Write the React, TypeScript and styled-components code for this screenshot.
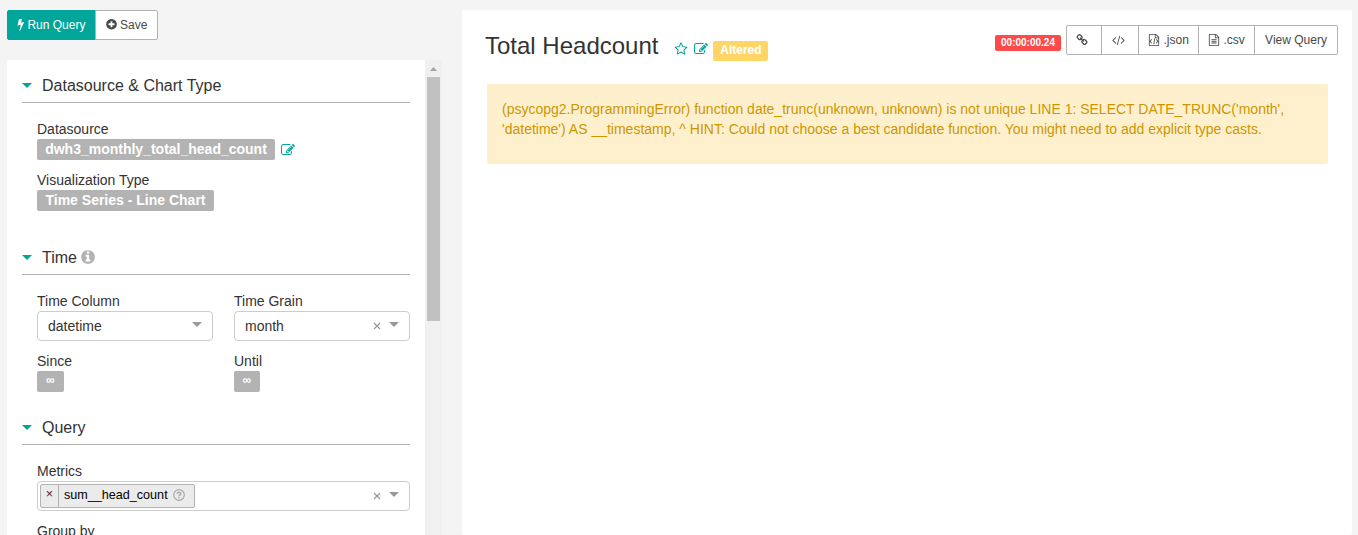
import React from 'react';
import styled, { createGlobalStyle } from 'styled-components';

const Global = createGlobalStyle`
  *, *::before, *::after { box-sizing: border-box; }
  html, body { margin: 0; height: 100%; overflow: hidden; }
  body {
    background: #f4f4f4;
    color: #333;
    font: 14px/20px "Liberation Sans", Arial, Helvetica, sans-serif;
  }
  #root { height: 100%; }
`;

const GREY = '#b3b3b3';
const TEAL = '#00a699';

const Page = styled.main`
  display: flex;
  gap: 20px;
  height: 100vh;
  padding: 10px 6px 0 7px;
  overflow: hidden;
`;

const Sidebar = styled.aside`
  display: flex;
  flex-direction: column;
  gap: 20px;
  width: 435px;
  flex: none;
  min-height: 0;
`;

const ButtonGroup = styled.div`
  display: flex;
  flex: none;
`;

const Button = styled.button<{ $primary?: boolean; $width: number; $nudge?: number }>`
  display: flex;
  align-items: center;
  justify-content: center;
  width: ${p => p.$width}px;
  height: 30px;
  padding: 0 ${p => p.$nudge ?? 0}px 1px 0;
  border: 1px solid ${p => (p.$primary ? TEAL : GREY)};
  background: ${p => (p.$primary ? TEAL : '#fff')};
  color: ${p => (p.$primary ? '#fff' : '#484848')};
  font: 12px/18px "Liberation Sans", Arial, sans-serif;
  white-space: pre;
  & + & { margin-left: -1px; }
  &:first-child { border-radius: 2px 0 0 2px; }
  &:last-child { border-radius: 0 2px 2px 0; }
`;

const Scroller = styled.div`
  display: flex;
  flex: 1;
  min-height: 0;
`;

const Controls = styled.div`
  width: 418px;
  padding: 12px 15px 0;
  background: #fff;
  border-radius: 2px 0 0 0;
  overflow: hidden;
`;

const Track = styled.div`
  display: flex;
  flex-direction: column;
  align-items: center;
  width: 17px;
  background: #f0f0f0;
`;

const TrackArrow = styled.div`
  display: flex;
  align-items: center;
  justify-content: center;
  height: 17px;
  svg { display: block; }
`;

const Thumb = styled.div`
  width: 13px;
  height: 244px;
  background: #c1c1c1;
`;

const Section = styled.section<{ $gap?: number }>`
  margin-bottom: ${p => p.$gap ?? 0}px;
`;

const SectionTitle = styled.h2`
  display: flex;
  align-items: center;
  height: 31px;
  margin: 0 0 16px;
  padding-bottom: 2px;
  border-bottom: 1px solid ${GREY};
  font-size: 16px;
  font-weight: 400;
  line-height: 20px;
  svg { margin: 0 0 2px -1px; }
`;

const Caret = styled.span<{ $color: string }>`
  flex: none;
  border: 5px solid transparent;
  border-top-color: ${p => p.$color};
  border-bottom: 0;
`;

const TitleCaret = styled(Caret)`
  margin: 0 10px 2px 0;
`;

const Fields = styled.div`
  display: grid;
  gap: 10px 21px;
  padding: 0 0 0 15px;
`;

const TwoFields = styled(Fields)`
  grid-template-columns: 176px 176px;
`;

const Label = styled.div`
  height: 20px;
`;

const TagRow = styled.div`
  display: flex;
  align-items: center;
  gap: 6px;
  height: 21px;
`;

const Tag = styled.span<{ $width: number; $small?: boolean }>`
  width: ${p => p.$width}px;
  height: 21px;
  border-radius: 2px;
  background: ${GREY};
  color: #fff;
  font-size: ${p => (p.$small ? 12 : 14)}px;
  font-weight: 700;
  line-height: ${p => (p.$small ? 19 : 20)}px;
  text-align: center;
  white-space: nowrap;
`;

const Select = styled.div<{ $multi?: boolean }>`
  display: flex;
  align-items: center;
  height: 30px;
  padding: ${p => (p.$multi ? '0 10px 0 2px' : '0 10px')};
  border: 1px solid #ccc;
  border-radius: 4px;
  background: #fff;
  svg { margin-right: 8px; }
  ${Caret} { margin-bottom: 3px; }
`;

const Value = styled.span`
  flex: 1;
`;

const Chip = styled.span`
  display: flex;
  height: 24px;
  margin-right: auto;
  border: 1px solid ${GREY};
  border-radius: 2px;
  background: #ebebeb;
  color: #000;
  font-size: 12.6px;
  line-height: 20px;
`;

const ChipRemove = styled.span`
  width: 18px;
  border-right: 1px solid ${GREY};
  text-align: center;
  line-height: 18px;
  color: #641d12;
`;

const ChipText = styled.span`
  display: flex;
  align-items: center;
  gap: 5px;
  width: 135px;
  padding: 0 0 3px 5px;
  svg { margin-right: 0; }
`;

const Chart = styled.section`
  flex: 1;
  padding: 15px 14px 0 23px;
  background: #fff;
  border-radius: 2px;
`;

const ChartHeader = styled.header`
  display: flex;
  align-items: flex-start;
  height: 59px;
`;

const Title = styled.h1`
  margin: 7px 16px 0 0;
  font-size: 24px;
  font-weight: 400;
  line-height: 28px;
`;

const TitleIcons = styled.div`
  display: flex;
  gap: 6px;
  margin: 17px 5px 0 0;
`;

const Altered = styled.span`
  width: 55px;
  height: 20px;
  margin-top: 16px;
  border-radius: 2px;
  background: #ffd666;
  color: #fff;
  font-size: 12px;
  font-weight: 700;
  line-height: 18px;
  text-align: center;
`;

const Timer = styled.span`
  width: 66px;
  height: 16px;
  margin: 10px 5px 0 auto;
  border-radius: 2px;
  background: #ff4a4a;
  color: #fff;
  font-size: 10px;
  font-weight: 700;
  line-height: 16px;
  text-align: center;
`;

const Alert = styled.div`
  height: 80px;
  margin: 0 10px 0 2px;
  padding: 15px;
  border-radius: 2px;
  background: #fff0cd;
  color: #cc9600;
`;

const sheet =
  'M1596 380q28 28 48 76t20 88v1152q0 40-28 68t-68 28h-1344q-40 0-68-28t-28-68v-1600q0-40 28-68t68-28h896q40 0 88 20t76 48zm-444-244v376h376q-10-29-22-41l-313-313q-12-12-41-22zm384 1528v-1024h-416q-40 0-68-28t-28-68v-416h-768v1536h1280z';

const paths = {
  bolt: 'M1333 566q18 20 7 44l-540 1157q-13 25-42 25-4 0-14-2-17-5-25.5-19t-4.5-30l197-808-406 101q-4 1-12 1-18 0-31-11-18-15-13-39l201-825q4-14 16-23t28-9h328q19 0 32 12.5t13 29.5q0 8-5 18l-171 463 396-98q8-2 12-2 19 0 34 15z',
  plus: 'M1344 960v-128q0-26-19-45t-45-19h-256v-256q0-26-19-45t-45-19h-128q-26 0-45 19t-19 45v256h-256q-26 0-45 19t-19 45v128q0 26 19 45t45 19h256v256q0 26 19 45t45 19h128q26 0 45-19t19-45v-256h256q26 0 45-19t19-45zm320-64q0 209-103 385.5t-279.5 279.5-385.5 103-385.5-103-279.5-279.5-103-385.5 103-385.5 279.5-279.5 385.5-103 385.5 103 279.5 279.5 103 385.5z',
  info: 'M1152 1376v-160q0-14-9-23t-23-9h-96v-512q0-14-9-23t-23-9h-320q-14 0-23 9t-9 23v160q0 14 9 23t23 9h96v320h-96q-14 0-23 9t-9 23v160q0 14 9 23t23 9h448q14 0 23-9t9-23zm-128-896v-160q0-14-9-23t-23-9h-192q-14 0-23 9t-9 23v160q0 14 9 23t23 9h192q14 0 23-9t9-23zm640 416q0 209-103 385.5t-279.5 279.5-385.5 103-385.5-103-279.5-279.5-103-385.5 103-385.5 279.5-279.5 385.5-103 385.5 103 279.5 279.5 103 385.5z',
  star: 'M1201 1004l306-297-422-62-189-382-189 382-422 62 306 297-73 421 378-199 377 199zm527-357q0 22-26 48l-363 354 86 500q1 7 1 20 0 50-41 50-19 0-40-12l-449-236-449 236q-22 12-40 12-21 0-31.5-14.5t-10.5-35.5q0-6 2-20l86-500-364-354q-25-27-25-48 0-37 56-46l502-73 225-455q19-41 49-41t49 41l225 455 502 73q56 9 56 46z',
  edit: 'M888 1184l116-116-152-152-116 116v56h96v96h56zm440-720q-16-16-33 1l-350 350q-17 17-1 33t33-1l350-350q17-17 1-33zm80 594v190q0 119-84.5 203.5t-203.5 84.5h-832q-119 0-203.5-84.5t-84.5-203.5v-832q0-119 84.5-203.5t203.5-84.5h832q63 0 117 25 15 7 18 23 3 17-9 29l-49 49q-14 14-32 8-23-6-45-6h-832q-66 0-113 47t-47 113v832q0 66 47 113t113 47h832q66 0 113-47t47-113v-126q0-13 9-22l64-64q15-15 35-7t20 29zm-96-738l288 288-672 672h-288v-288zm444 132l-92 92-288-288 92-92q28-28 68-28t68 28l152 152q28 28 28 68t-28 68z',
  link: 'M1520 1216q0-40-28-68l-208-208q-28-28-68-28-42 0-72 32 3 3 19 18.5t21.5 21.5 15 19 13 25.5 3.5 27.5q0 40-28 68t-68 28q-15 0-27.5-3.5t-25.5-13-19-15-21.5-21.5-18.5-19q-33 31-33 73 0 40 28 68l206 207q27 27 68 27 40 0 68-26l147-146q28-28 28-67zm-703-705q0-40-28-68l-206-207q-28-28-68-28-39 0-68 27l-147 146q-28 28-28 67 0 40 28 68l208 208q27 27 68 27 42 0 72-31-3-3-19-18.5t-21.5-21.5-15-19-13-25.5-3.5-27.5q0-40 28-68t68-28q15 0 27.5 3.5t25.5 13 19 15 21.5 21.5 18.5 19q33-31 33-73zm895 705q0 120-85 203l-147 146q-83 83-203 83-121 0-204-85l-206-207q-83-83-83-203 0-123 88-209l-88-88q-86 88-208 88-120 0-204-84l-208-208q-84-84-84-204t85-203l147-146q83-83 203-83 121 0 204 85l206 207q83 83 83 203 0 123-88 209l88 88q86-88 208-88 120 0 204 84l208 208q84 84 84 204z',
  code: 'M617 1399l-50 50q-10 10-23 10t-23-10l-466-466q-10-10-10-23t10-23l466-466q10-10 23-10t23 10l50 50q10 10 10 23t-10 23l-393 393 393 393q10 10 10 23t-10 23zm591-1067l-373 1291q-4 13-15.5 19.5t-23.5 2.5l-62-17q-13-4-19.5-15.5t-2.5-24.5l373-1291q4-13 15.5-19.5t23.5-2.5l62 17q13 4 19.5 15.5t2.5 24.5zm657 651l-466 466q-10 10-23 10t-23-10l-50-50q-10-10-10-23t10-23l393-393-393-393q-10-10-10-23t10-23l50-50q10-10 23-10t23 10l466 466q10 10 10 23t-10 23z',
  fileText: sheet + 'M512 768h768v128h-768zM512 1024h768v128h-768zM512 1280h768v128h-768z',
  fileCode: sheet + 'M502 755l100 75-195 258 195 258-100 75-255-333zM1290 755l-100 75 195 258-195 258 100 75 255-333zM946 640l124 20-145 872-124-20z',
};

type IconProps = { name: keyof typeof paths; size: number; color?: string; width?: number; box?: number };

const Icon = ({ name, size, color = 'currentColor', width = size, box = 1792 }: IconProps) => (
  <svg width={width} height={size} viewBox={`${(1792 - box) / 2 + (name === 'code' ? 64 : 0)} 0 ${box} 1792`} fill={color}>
    <path d={paths[name]} />
  </svg>
);

const Clear = () => (
  <svg width="8" height="8" viewBox="0 0 8 8" stroke="#999" strokeWidth="1.2">
    <path d="M1 1l6 6M7 1L1 7" />
  </svg>
);

const Help = () => (
  <svg width="12" height="12" viewBox="0 0 12 12" fill="none" stroke="#aaa">
    <circle cx="6" cy="6" r="5.3" strokeWidth="1.2" />
    <path d="M4.1 4.8Q4.4 3.2 6 3.2T7.8 4.7Q7.8 5.5 6.8 6T6 7.2M6 8v1.3" strokeWidth="1.5" />
  </svg>
);

export default function App() {
  return (
    <>
      <Global />
      <Page>
        <Sidebar>
          <ButtonGroup>
            <Button $primary $width={89} $nudge={1}>
              <Icon name="bolt" size={13} width={7.5} box={1045} /> Run Query
            </Button>
            <Button $width={63}>
              <Icon name="plus" size={12.5} width={11} box={1600} /> Save
            </Button>
          </ButtonGroup>
          <Scroller>
            <Controls>
              <Section $gap={33}>
                <SectionTitle><TitleCaret $color={TEAL} />Datasource &amp; Chart Type</SectionTitle>
                <Fields>
                  <div>
                    <Label>Datasource</Label>
                    <TagRow>
                      <Tag $width={238}>dwh3_monthly_total_head_count</Tag>
                      <Icon name="edit" size={14} color={TEAL} />
                    </TagRow>
                  </div>
                  <div>
                    <Label>Visualization Type</Label>
                    <TagRow><Tag $width={177}>Time Series - Line Chart</Tag></TagRow>
                  </div>
                </Fields>
              </Section>
              <Section $gap={22}>
                <SectionTitle>
                  <TitleCaret $color={TEAL} />Time&nbsp;<Icon name="info" size={16} color={GREY} />
                </SectionTitle>
                <TwoFields>
                  <div>
                    <Label>Time Column</Label>
                    <Select><Value>datetime</Value><Caret $color="#999" /></Select>
                  </div>
                  <div>
                    <Label>Time Grain</Label>
                    <Select><Value>month</Value><Clear /><Caret $color="#999" /></Select>
                  </div>
                  <div>
                    <Label>Since</Label>
                    <TagRow><Tag $width={27} $small>∞</Tag></TagRow>
                  </div>
                  <div>
                    <Label>Until</Label>
                    <TagRow><Tag $width={26} $small>∞</Tag></TagRow>
                  </div>
                </TwoFields>
              </Section>
              <Section>
                <SectionTitle><TitleCaret $color={TEAL} />Query</SectionTitle>
                <Fields>
                  <div>
                    <Label>Metrics</Label>
                    <Select $multi>
                      <Chip>
                        <ChipRemove>×</ChipRemove>
                        <ChipText>sum__head_count<Help /></ChipText>
                      </Chip>
                      <Clear />
                      <Caret $color="#999" />
                    </Select>
                  </div>
                  <Label>Group by</Label>
                </Fields>
              </Section>
            </Controls>
            <Track>
              <TrackArrow>
                <svg width="7" height="4" viewBox="0 0 7 4" fill="#a3a3a3"><path d="M0 4L3.5 0 7 4z" /></svg>
              </TrackArrow>
              <Thumb />
            </Track>
          </Scroller>
        </Sidebar>
        <Chart>
          <ChartHeader>
            <Title>Total Headcount</Title>
            <TitleIcons>
              <Icon name="star" size={14} color={TEAL} />
              <Icon name="edit" size={14} color={TEAL} />
            </TitleIcons>
            <Altered>Altered</Altered>
            <Timer>00:00:00.24</Timer>
            <ButtonGroup>
              <Button $width={36} $nudge={4}><Icon name="link" size={12} /></Button>
              <Button $width={38} $nudge={4}><Icon name="code" size={12} width={13} box={1920} /></Button>
              <Button $width={61}><Icon name="fileCode" size={12} /> .json</Button>
              <Button $width={57}><Icon name="fileText" size={12} /> .csv</Button>
              <Button $width={84}>View Query</Button>
            </ButtonGroup>
          </ChartHeader>
          <Alert>
            (psycopg2.ProgrammingError) function date_trunc(unknown, unknown) is not unique LINE 1: SELECT
            DATE_TRUNC('month', 'datetime') AS __timestamp, ^ HINT: Could not choose a best candidate function. You
            might need to add explicit type casts.
          </Alert>
        </Chart>
      </Page>
    </>
  );
}
